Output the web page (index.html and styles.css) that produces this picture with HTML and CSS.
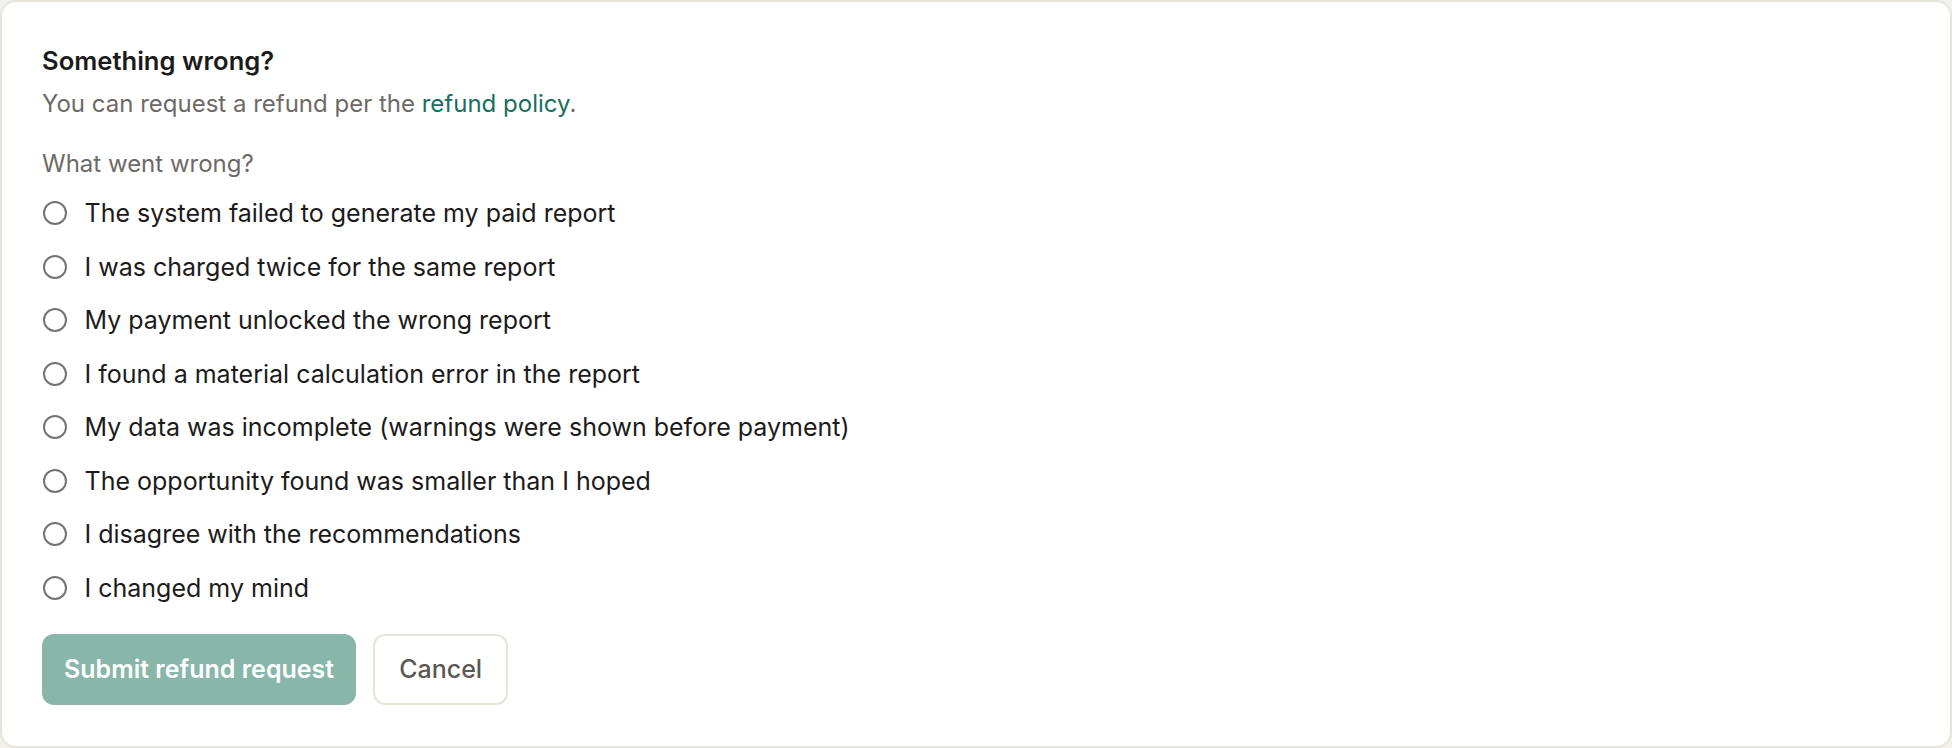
FILE: index.html
```html
<!DOCTYPE html>
<html lang="en">
<head>
<meta charset="utf-8">
<title>Refund request</title>
<link rel="stylesheet" href="styles.css">
</head>
<body>
<div class="card">
  <h2 class="title">Something wrong?</h2>
  <p class="sub">You can request a refund per the <a class="link" href="#">refund policy</a>.</p>
  <div class="label">What went wrong?</div>
  <div class="options">
    <label class="opt"><input type="radio" name="r" class="radio"><span>The system failed to generate my paid report</span></label>
    <label class="opt"><input type="radio" name="r" class="radio"><span>I was charged twice for the same report</span></label>
    <label class="opt"><input type="radio" name="r" class="radio"><span>My payment unlocked the wrong report</span></label>
    <label class="opt"><input type="radio" name="r" class="radio"><span>I found a material calculation error in the report</span></label>
    <label class="opt"><input type="radio" name="r" class="radio"><span>My data was incomplete (warnings were shown before payment)</span></label>
    <label class="opt"><input type="radio" name="r" class="radio"><span>The opportunity found was smaller than I hoped</span></label>
    <label class="opt"><input type="radio" name="r" class="radio"><span>I disagree with the recommendations</span></label>
    <label class="opt"><input type="radio" name="r" class="radio"><span>I changed my mind</span></label>
  </div>
  <div class="actions">
    <button class="btn primary" disabled>Submit refund request</button>
    <button class="btn secondary">Cancel</button>
  </div>
</div>
</body>
</html>
```
FILE: styles.css
```css
html, body {
  margin: 0;
  padding: 0;
  background: #f3f1ec;
}
body {
  font-family: Inter, "Noto Sans", sans-serif;
  color: #1c1b1a;
}
.card {
  box-sizing: border-box;
  width: 1952px;
  height: 748px;
  background: #ffffff;
  border: 2px solid #e7e4dc;
  border-radius: 16px;
  padding: 44px 40px 40px 40px;
}
.title {
  margin: 0;
  font-size: 25.6px;
  line-height: 30px;
  font-weight: 600;
  color: #1c1b1a;
}
.sub {
  margin: 13px 0 0 0;
  font-size: 24px;
  line-height: 30px;
  color: #6d6a66;
}
.link {
  color: #15705c;
  text-decoration: none;
}
.label {
  margin-top: 30px;
  font-size: 24px;
  line-height: 30px;
  color: #6d6a66;
}
.options {
  margin-top: 19px;
  display: flex;
  flex-direction: column;
  gap: 23.5px;
}
.opt {
  display: flex;
  align-items: center;
  gap: 18px;
  font-size: 25px;
  line-height: 30px;
  color: #1c1b1a;
}
.radio {
  appearance: none;
  -webkit-appearance: none;
  margin: 0 0 0 0.5px;
  box-sizing: border-box;
  width: 24px;
  height: 24px;
  border: 2px solid #747474;
  border-radius: 50%;
  background: #ffffff;
}
.actions {
  margin-top: 31px;
  display: flex;
  gap: 17px;
}
.btn {
  box-sizing: border-box;
  height: 71px;
  border-radius: 12px;
  font-family: Inter, "Noto Sans", sans-serif;
  font-size: 25px;
}
.primary {
  background: #88b6a9;
  color: #ffffff;
  border: none;
  font-weight: 600;
  padding: 0 22px;
}
.secondary {
  background: #ffffff;
  color: #5c5854;
  border: 2px solid #e7e4dc;
  font-weight: 500;
  padding: 0 24px;
}
```
